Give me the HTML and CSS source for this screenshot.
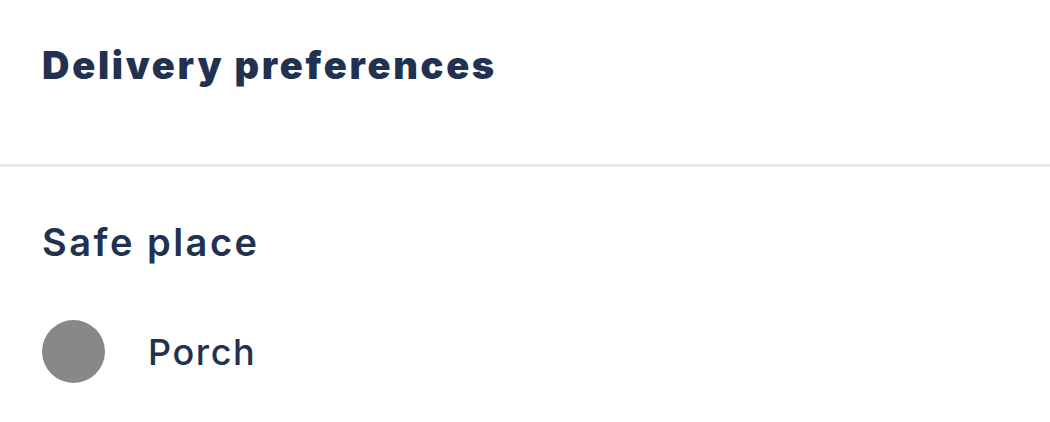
FILE: index.html
```html
<!DOCTYPE html>
<html lang="en">
<head>
    <meta charset="UTF-8">
    <meta name="viewport" content="width=device-width, initial-scale=1.0">
    <title>Delivery preferences</title>
    <link rel="stylesheet" href="styles.css">
</head>
<body>
    <div class="page-header">
        <h1>Delivery preferences</h1>
    </div>

    <div class="section">
        <h2>Safe place</h2>
        <label class="option">
            <span class="radio"></span>
            <span class="option-label">Porch</span>
        </label>
    </div>
</body>
</html>
```

FILE: styles.css
```css
body {
    font-family: Inter, "Open Sans", sans-serif;
    margin: 0;
    color: #22314f;
    background: #fff;
}
.page-header {
    height: 167px;
    padding: 0 42px;
    border-bottom: 3px solid #ebebeb;
    box-sizing: border-box;
}
h1 {
    margin: 0;
    padding-top: 40px;
    font-size: 38px;
    font-weight: 900;
    line-height: 50px;
    letter-spacing: 2.7px;
}
.section {
    padding: 0 42px;
}
h2 {
    margin: 0;
    padding-top: 50px;
    font-size: 38px;
    font-weight: 600;
    line-height: 50px;
    letter-spacing: 2.5px;
}
.option {
    display: flex;
    align-items: center;
    margin-top: 53px;
}
.radio {
    width: 63px;
    height: 63px;
    border-radius: 50%;
    background: #888;
}
.option-label {
    margin-left: 43px;
    font-size: 36px;
    font-weight: 500;
    letter-spacing: 1.6px;
}
```
